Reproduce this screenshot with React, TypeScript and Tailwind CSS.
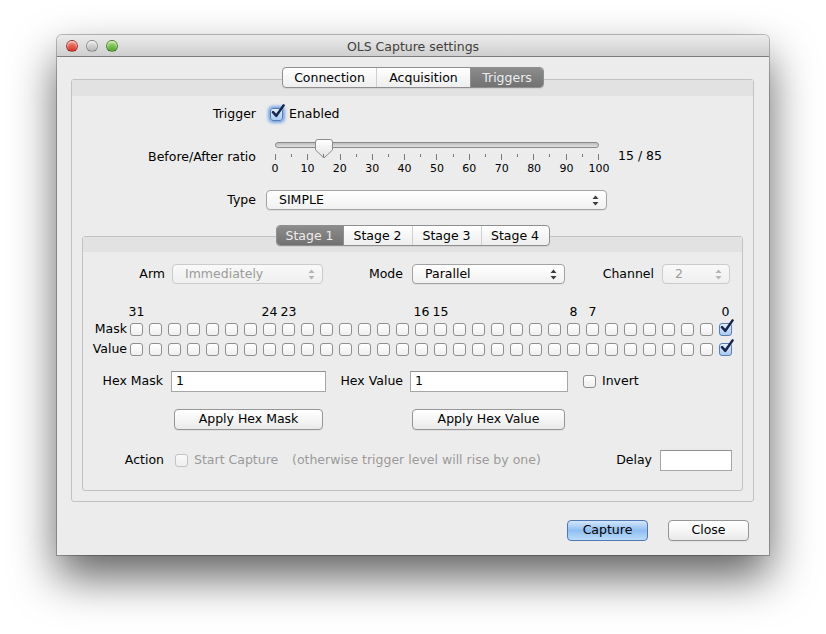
import React from "react";

const FONT = "font-['DejaVu_Sans',sans-serif]";

function Check({ className = "" }: { className?: string }) {
  return (
    <svg
      className={"pointer-events-none absolute " + className}
      width="16"
      height="16"
      viewBox="0 0 16 16"
    >
      <path
        d="M3 8.2 L6.3 11.8 L13.6 1.4"
        fill="none"
        stroke="#16264d"
        strokeWidth="2.5"
        strokeLinecap="round"
        strokeLinejoin="round"
      />
    </svg>
  );
}

function Box({
  checked = false,
  disabled = false,
  focus = false,
}: {
  checked?: boolean;
  disabled?: boolean;
  focus?: boolean;
}) {
  const base = "relative w-[13px] h-[13px] shrink-0 rounded-[3px] border";
  let cls = "";
  if (checked) {
    cls =
      "border-[#5a7db0] bg-gradient-to-b from-[#e4effc] to-[#a9caf0]" +
      (focus ? " shadow-[0_0_3px_2px_rgba(90,150,230,0.8)]" : "");
  } else if (disabled) {
    cls = "border-[#c3c3c3] bg-gradient-to-b from-[#fafafa] to-[#eeeeee]";
  } else {
    cls = "border-[#8f8f8f] bg-gradient-to-b from-[#ffffff] to-[#efefef]";
  }
  return (
    <div className={base + " " + cls}>
      {checked && <Check className="-top-[5px] -left-[1px]" />}
    </div>
  );
}

function Arrows({ disabled = false }: { disabled?: boolean }) {
  const c = disabled ? "#b4b4b4" : "#3c3c3c";
  return (
    <svg width="7" height="11" viewBox="0 0 7 11">
      <path d="M3.5 0.5 L6.5 4 H0.5 Z" fill={c} />
      <path d="M3.5 10.5 L6.5 7 H0.5 Z" fill={c} />
    </svg>
  );
}

function Select({
  value,
  width,
  disabled = false,
}: {
  value: string;
  width: string;
  disabled?: boolean;
}) {
  return (
    <div
      className={
        "flex h-[20px] items-center justify-between rounded-[4px] border pl-[12px] pr-[7px] " +
        width +
        (disabled
          ? " border-[#cbcbcb] bg-gradient-to-b from-[#f9f9f9] to-[#efefef] text-[#9b9b9b]"
          : " border-[#a3a3a3] bg-gradient-to-b from-[#ffffff] to-[#f1f1f1] text-black shadow-[0_1px_0_rgba(0,0,0,0.06)]")
      }
    >
      <span className="leading-none">{value}</span>
      <Arrows disabled={disabled} />
    </div>
  );
}

function Input({ value = "", width }: { value?: string; width: string }) {
  return (
    <div
      className={
        "flex h-[21px] items-center border border-[#a6a6a6] border-t-[#8e8e8e] bg-white pl-[4px] " +
        width
      }
    >
      <span className="leading-none">{value}</span>
    </div>
  );
}

function Button({
  label,
  width,
  primary = false,
}: {
  label: string;
  width: string;
  primary?: boolean;
}) {
  return (
    <div
      className={
        "flex h-[21px] items-center justify-center rounded-[4px] border leading-none " +
        width +
        (primary
          ? " border-[#4f77b3] bg-gradient-to-b from-[#d3e6fb] via-[#8fbef2] to-[#bcdcf8] text-black"
          : " border-[#959595] bg-gradient-to-b from-[#ffffff] via-[#f6f6f6] to-[#e9e9e9] text-black shadow-[0_1px_0_rgba(0,0,0,0.05)]")
      }
    >
      {label}
    </div>
  );
}

function Segmented({
  items,
  selected,
}: {
  items: { label: string; w: string }[];
  selected: number;
}) {
  return (
    <div className="relative z-10 flex h-[21px] overflow-hidden rounded-[4px] border border-[#8f8f8f] bg-gradient-to-b from-[#ffffff] to-[#eeeeee] shadow-[0_1px_0_rgba(0,0,0,0.06)]">
      {items.map((it, i) => {
        const sel = i === selected;
        const divider =
          i > 0 && i !== selected && i - 1 !== selected
            ? " border-l border-[#cfcfcf]"
            : i > 0
            ? " border-l border-[#8f8f8f]"
            : "";
        return (
          <div
            key={it.label}
            className={
              "flex items-center justify-center pt-[1px] leading-none " +
              it.w +
              divider +
              (sel
                ? " bg-gradient-to-b from-[#8c8c8c] to-[#727272] text-[#ededed]"
                : " text-black")
            }
          >
            {it.label}
          </div>
        );
      })}
    </div>
  );
}

function Slider() {
  const labels = ["0", "10", "20", "30", "40", "50", "60", "70", "80", "90", "100"];
  const ticks = Array.from({ length: 21 }, (_, i) => i);
  return (
    <div className="relative h-[38px] w-[324px]">
      <div className="absolute left-0 right-0 top-[4px] h-[6px] rounded-full border border-[#8a8a8a] bg-gradient-to-b from-[#bdbdbd] to-[#e2e2e2]" />
      <svg
        className="absolute top-[1px] left-[40px]"
        width="18"
        height="20"
        viewBox="0 0 18 20"
      >
        <defs>
          <linearGradient id="thumb" x1="0" y1="0" x2="0" y2="1">
            <stop offset="0" stopColor="#ffffff" />
            <stop offset="1" stopColor="#e2e2e2" />
          </linearGradient>
        </defs>
        <path
          d="M3 0.5 H15 Q17.5 0.5 17.5 3 V11 L9 19 L0.5 11 V3 Q0.5 0.5 3 0.5 Z"
          fill="url(#thumb)"
          stroke="#8c8c8c"
          strokeWidth="1"
        />
      </svg>
      <div className="absolute left-0 right-0 top-[16px] flex justify-between">
        {ticks.map((t) => (
          <div
            key={t}
            className={
              "w-px bg-[#7a7a7a] " + (t % 2 === 0 ? "h-[6px]" : "h-[3px]")
            }
          />
        ))}
      </div>
      <div className="absolute left-0 right-0 top-[24px] flex justify-between text-[11px] leading-[13px]">
        {labels.map((l) => (
          <div key={l} className="flex w-0 justify-center whitespace-nowrap">
            {l}
          </div>
        ))}
      </div>
    </div>
  );
}

function Light({ color }: { color: string }) {
  return (
    <div
      className={
        "h-[12px] w-[12px] rounded-full border border-black/30 shadow-[inset_0_1px_2px_rgba(255,255,255,0.8)] " +
        color
      }
    />
  );
}

const bitLabels: Record<number, string> = {
  0: "31",
  7: "24",
  8: "23",
  15: "16",
  16: "15",
  23: "8",
  24: "7",
  31: "0",
};

function BitRow({ label }: { label: string }) {
  return (
    <div className="flex h-[13px] items-center">
      <div className="w-[44px] text-right leading-none">{label}</div>
      <div className="ml-[3px] grid grid-cols-[repeat(32,13px)] gap-x-[6px]">
        {Array.from({ length: 32 }, (_, i) => (
          <Box key={i} checked={i === 31} />
        ))}
      </div>
    </div>
  );
}

export default function App() {
  return (
    <div className={"min-h-[634px] bg-white pl-[57px] pt-[35px] text-[12.5px] text-black " + FONT}>
      <div className="flex h-[520px] w-[712px] flex-col rounded-t-[5px] bg-[#ececec] shadow-[0_22px_45px_rgba(0,0,0,0.62),0_0_0_1px_rgba(0,0,0,0.25)]">
        {/* Title bar */}
        <div className="relative flex h-[22px] items-center rounded-t-[5px] border-b border-[#7d7d7d] bg-gradient-to-b from-[#ebebeb] to-[#cfcfcf]">
          <div className="flex gap-[8px] pl-[9px] pt-[1px]">
            <Light color="bg-gradient-to-b from-[#f08a80] to-[#d8261c]" />
            <Light color="bg-gradient-to-b from-[#e8e8e8] to-[#b5b5b5]" />
            <Light color="bg-gradient-to-b from-[#a6e07c] to-[#4ea52a]" />
          </div>
          <div className="absolute inset-0 flex items-center justify-center pt-[3px] text-[#3f3f3f] leading-none">
            OLS Capture settings
          </div>
        </div>

        {/* Main tabs */}
        <div className="mt-[10px] flex justify-center -mb-[9px]">
          <Segmented
            selected={2}
            items={[
              { label: "Connection", w: "w-[93px]" },
              { label: "Acquisition", w: "w-[94px]" },
              { label: "Triggers", w: "w-[73px]" },
            ]}
          />
        </div>

        {/* Outer panel */}
        <div className="ml-[14px] mr-[15px] flex h-[423px] flex-col rounded-[3px] border border-[#c2c2c2]">
          <div className="h-[16px] bg-[#e2e2e2]" />

          <div className="mt-[8px] flex h-[20px] items-center">
            <div className="w-[184px] text-right">Trigger</div>
            <div className="ml-[14px]">
              <Box checked focus />
            </div>
            <div className="ml-[6px]">Enabled</div>
          </div>

          <div className="mt-[14px] flex items-center">
            <div className="w-[184px] text-right">Before/After ratio</div>
            <div className="ml-[19px]">
              <Slider />
            </div>
            <div className="ml-[19px] -mt-[2px]">15 / 85</div>
          </div>

          <div className="mt-[14px] flex items-center">
            <div className="w-[184px] text-right">Type</div>
            <div className="ml-[10px]">
              <Select value="SIMPLE" width="w-[341px]" />
            </div>
          </div>

          {/* Stage tabs */}
          <div className="mt-[15px] flex justify-center -mb-[10px]">
            <Segmented
              selected={0}
              items={[
                { label: "Stage 1", w: "w-[66px]" },
                { label: "Stage 2", w: "w-[69px]" },
                { label: "Stage 3", w: "w-[69px]" },
                { label: "Stage 4", w: "w-[68px]" },
              ]}
            />
          </div>

          {/* Stage panel */}
          <div className="mx-[10px] flex h-[255px] flex-col rounded-[3px] border border-[#c2c2c2]">
            <div className="h-[15px] bg-[#e2e2e2]" />

            <div className="mt-[12px] flex items-center">
              <div className="w-[82px] text-right">Arm</div>
              <div className="ml-[7px]">
                <Select value="Immediately" width="w-[151px]" disabled />
              </div>
              <div className="w-[80px] text-right">Mode</div>
              <div className="ml-[9px]">
                <Select value="Parallel" width="w-[153px]" />
              </div>
              <div className="w-[89px] text-right">Channel</div>
              <div className="ml-[8px]">
                <Select value="2" width="w-[68px]" disabled />
              </div>
            </div>

            <div className="mt-[21px] flex h-[14px] items-center">
              <div className="ml-[47px] grid grid-cols-[repeat(32,13px)] gap-x-[6px] leading-[14px]">
                {Array.from({ length: 32 }, (_, i) => (
                  <div key={i} className="flex justify-center whitespace-nowrap">
                    {bitLabels[i] ?? ""}
                  </div>
                ))}
              </div>
            </div>

            <div className="mt-[4px]">
              <BitRow label="Mask" />
            </div>
            <div className="mt-[7px]">
              <BitRow label="Value" />
            </div>

            <div className="mt-[15px] flex items-center">
              <div className="w-[80px] text-right">Hex Mask</div>
              <div className="ml-[8px]">
                <Input value="1" width="w-[155px]" />
              </div>
              <div className="w-[77px] text-right">Hex Value</div>
              <div className="ml-[7px]">
                <Input value="1" width="w-[158px]" />
              </div>
              <div className="ml-[15px]">
                <Box />
              </div>
              <div className="ml-[6px]">Invert</div>
            </div>

            <div className="mt-[17px] flex items-center">
              <div className="ml-[91px]">
                <Button label="Apply Hex Mask" width="w-[149px]" />
              </div>
              <div className="ml-[89px]">
                <Button label="Apply Hex Value" width="w-[153px]" />
              </div>
            </div>

            <div className="mt-[20px] flex items-center pr-[10px]">
              <div className="w-[81px] text-right">Action</div>
              <div className="ml-[11px]">
                <Box disabled />
              </div>
              <div className="ml-[6px] w-[98px] text-[#9a9a9a]">Start Capture</div>
              <div className="text-[#9a9a9a]">(otherwise trigger level will rise by one)</div>
              <div className="ml-auto">Delay</div>
              <div className="ml-[8px]">
                <Input width="w-[72px]" />
              </div>
            </div>
          </div>
        </div>

        {/* Bottom buttons */}
        <div className="mt-[18px] flex justify-end gap-[20px] pr-[20px]">
          <Button label="Capture" width="w-[81px]" primary />
          <Button label="Close" width="w-[81px]" />
        </div>
      </div>
    </div>
  );
}
